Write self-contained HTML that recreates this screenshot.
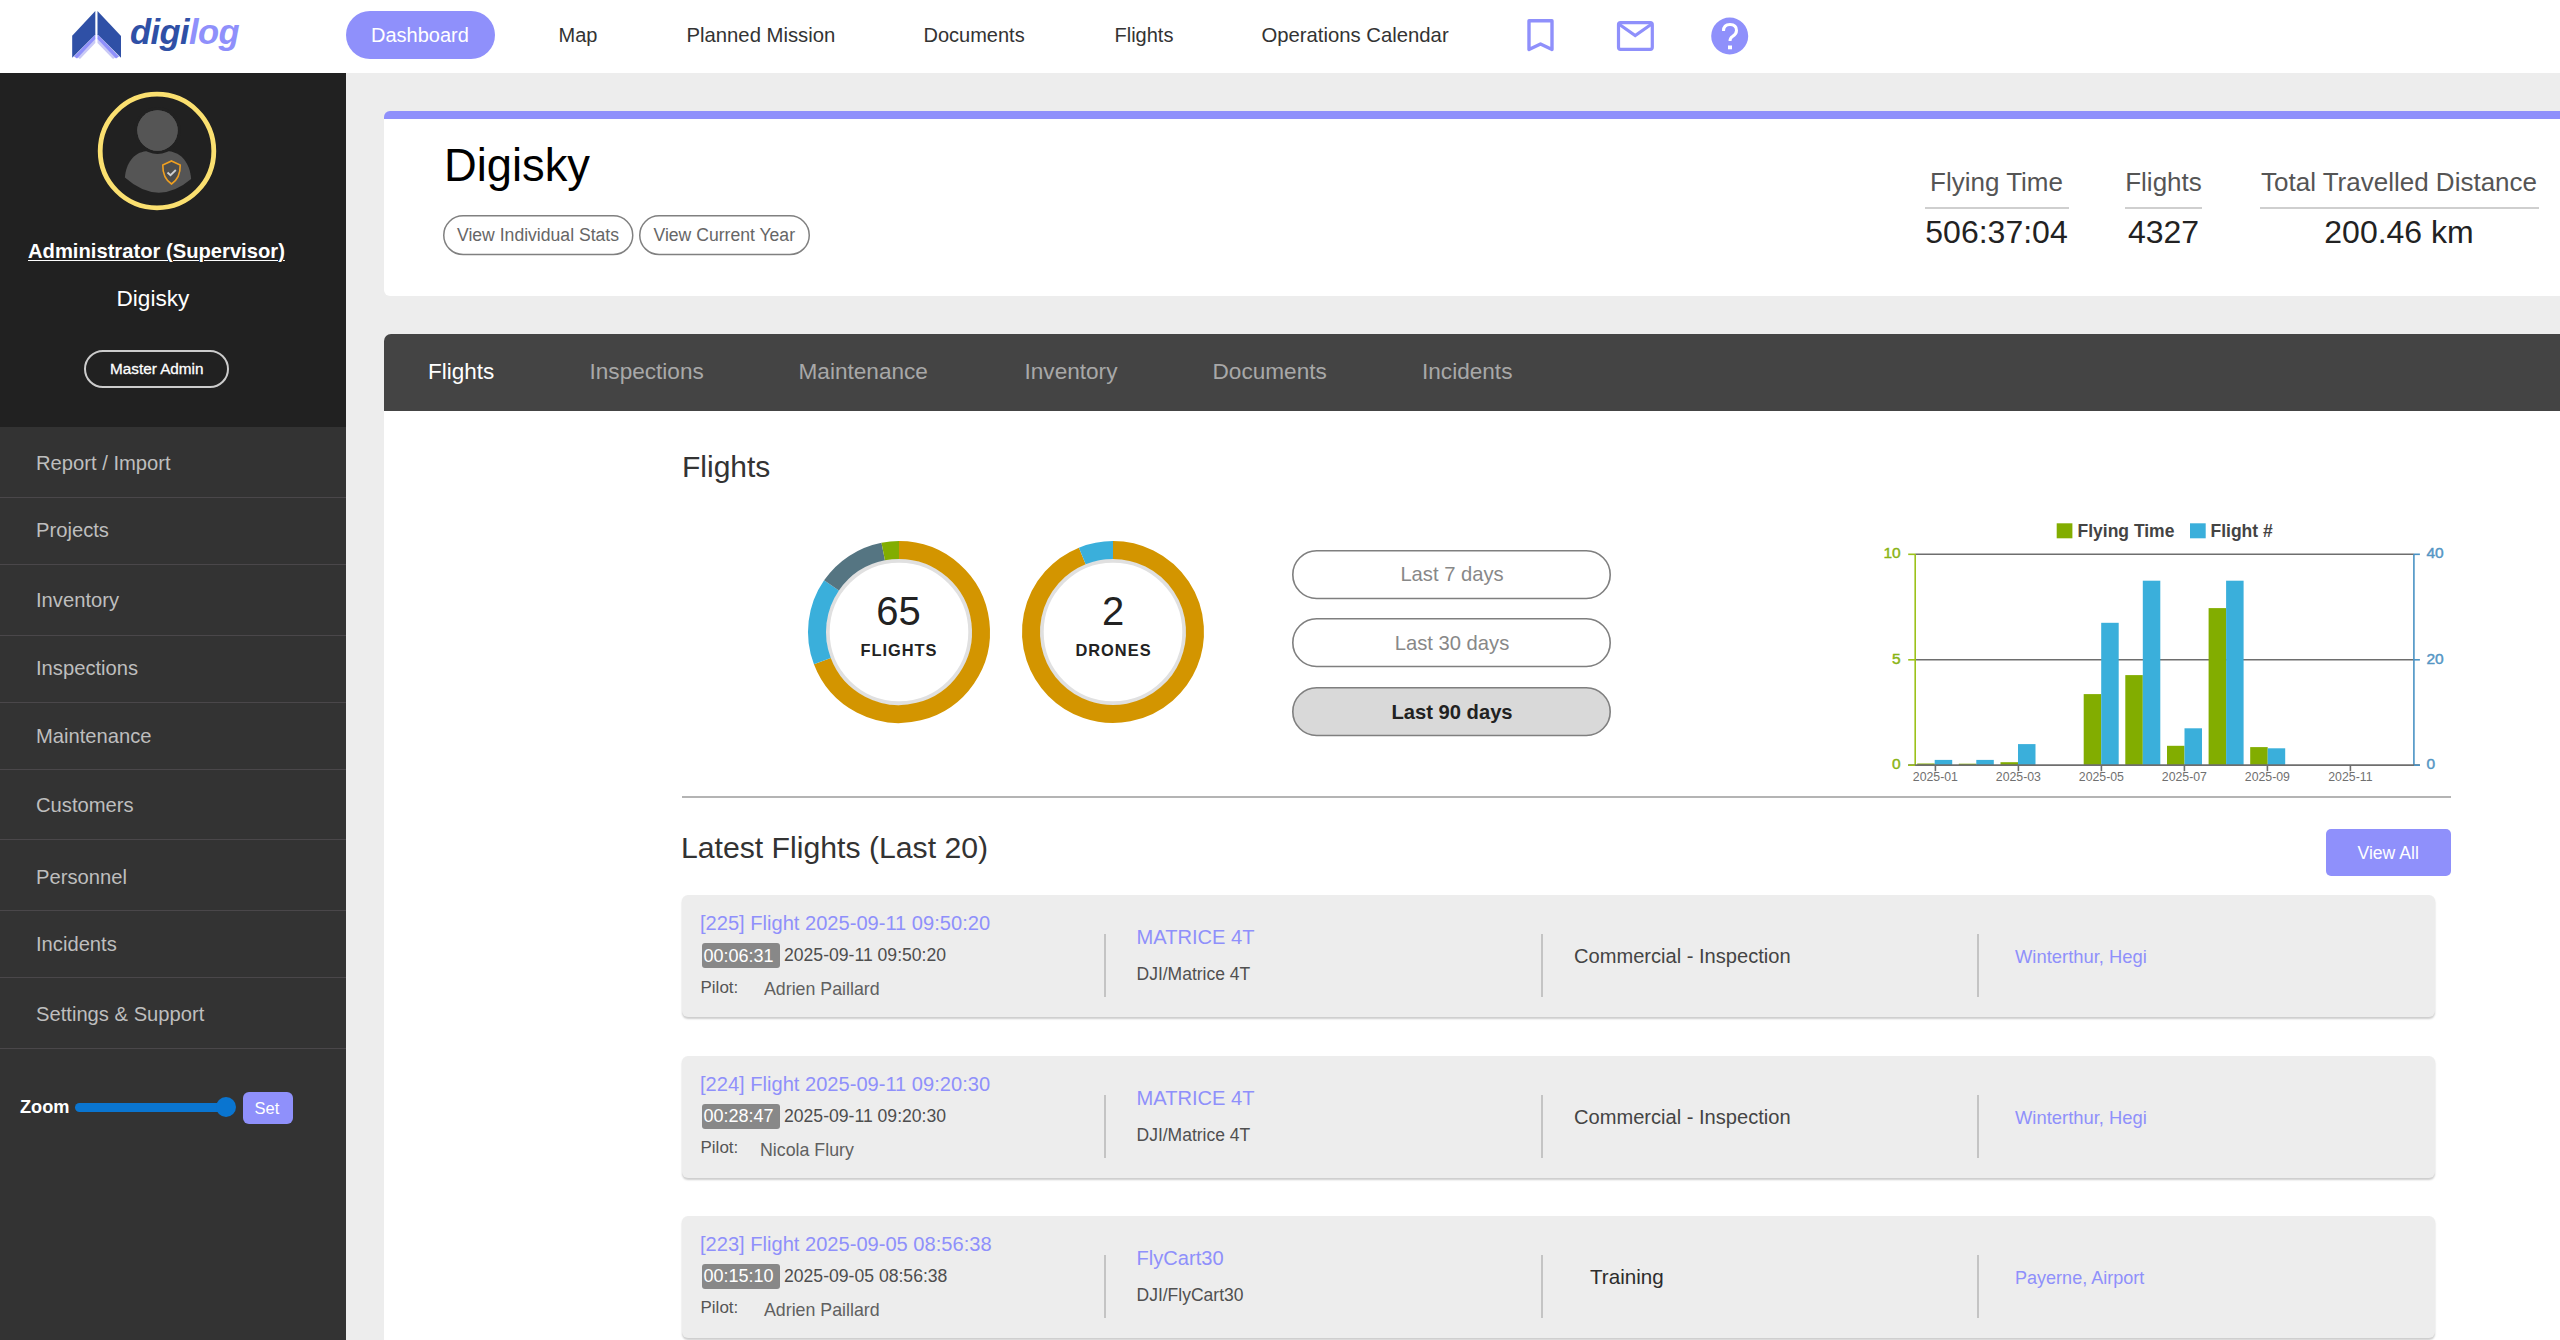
<!DOCTYPE html>
<html><head><meta charset="utf-8">
<style>
*{margin:0;padding:0;box-sizing:border-box}
html,body{width:2560px;height:1340px;overflow:hidden;background:#ededed;font-family:"Liberation Sans",sans-serif}
.a{position:absolute;white-space:pre;line-height:1}
</style></head><body>
<div style="position:absolute;left:0px;top:0px;width:2560px;height:73px;background:#fff;"></div>
<svg style="position:absolute;left:0;top:0" width="260" height="73" viewBox="0 0 260 73">
<polygon points="95.3,38 77,57 80,59 95.3,43" fill="#c9c9f6"/>
<polygon points="97.5,38 116,57 113,59 97.5,43" fill="#c9c9f6"/>
<polygon points="95.3,34.6 74,56.5 77,58.5 95.3,39" fill="#8f90fb"/>
<polygon points="97.5,34.3 119,56.5 116,58.5 97.5,39" fill="#8f90fb"/>
<polygon points="95.3,11.1 72.2,35.7 72.2,57.7 95.3,34.6" fill="#2f50a6"/>
<polygon points="97.5,11.1 121,36.1 121,57.7 97.5,34.3" fill="#2f50a6"/>
</svg>
<div class="a" style="left:130px;top:15.4px;font-size:34.6px;font-weight:700;font-style:italic;letter-spacing:-0.6px;color:#2f50a6">digi<span style="color:#8f90fb">log</span></div>
<div style="position:absolute;left:346px;top:11px;width:149px;height:48px;background:#8f90fb;border-radius:24px"></div>
<div class="a" style="left:371.0px;top:25.1px;font-size:20px;color:#fff;">Dashboard</div>
<div class="a" style="left:558.5px;top:25.1px;font-size:20px;color:#333;">Map</div>
<div class="a" style="left:686.5px;top:24.8px;font-size:20.3px;color:#333;">Planned Mission</div>
<div class="a" style="left:923.5px;top:25.1px;font-size:20px;color:#333;">Documents</div>
<div class="a" style="left:1114.5px;top:25.1px;font-size:20px;color:#333;">Flights</div>
<div class="a" style="left:1261.5px;top:24.8px;font-size:20.3px;color:#333;">Operations Calendar</div>
<svg style="position:absolute;left:1500px;top:0" width="280" height="73" viewBox="1500 0 280 73">
<path d="M1529,20.8 H1552 V49.5 L1540.5,44 L1529,49.5 Z" fill="none" stroke="#8f90fb" stroke-width="3.4" stroke-linejoin="round"/>
<rect x="1618.5" y="22.7" width="33.8" height="26.6" rx="2" fill="none" stroke="#8f90fb" stroke-width="3.2"/>
<path d="M1619.5,24.5 L1635.2,35.5 L1651,24.5" fill="none" stroke="#8f90fb" stroke-width="3.2"/>
<circle cx="1729.7" cy="36" r="18.5" fill="#8f90fb"/>
<path d="M1723.5,31 Q1723.5,24.5 1730,24.5 Q1736.5,24.5 1736.5,30.5 Q1736.5,34 1732.5,36.5 Q1730,38 1730,41" fill="none" stroke="#fff" stroke-width="3"/>
<rect x="1728" y="45.5" width="4" height="3.8" fill="#fff"/>
</svg>
<div style="position:absolute;left:0px;top:73px;width:346px;height:354px;background:#212121;"></div>
<div style="position:absolute;left:0px;top:427px;width:346px;height:913px;background:#333;"></div>
<svg style="position:absolute;left:0;top:73px" width="346" height="200" viewBox="0 73 346 200">
<circle cx="157" cy="151" r="56.8" fill="none" stroke="#fbe070" stroke-width="4.8"/>
<path d="M124.9,177.6 C126,163 134,152.5 146,151.3 L169,151.3 C181,152.5 190,163 191.1,179 Q158,207 124.9,177.6 Z" fill="#555"/>
<circle cx="157.5" cy="130.5" r="20.2" fill="#555" stroke="#212121" stroke-width="6.5" paint-order="stroke"/>
<circle cx="157.5" cy="130.5" r="20.2" fill="#555"/>
<path d="M171.5,161 L180.2,165 Q180.5,178 171.5,184 Q162.5,178 162.8,165 Z" fill="#4d4d4d" stroke="#f0a020" stroke-width="1.6"/>
<path d="M167.5,172.5 L170.5,175.2 L175.8,170" fill="none" stroke="#d0d0d0" stroke-width="1.8"/>
</svg>
<div class="a" style="left:28.0px;top:240.9px;font-size:20.2px;color:#fff;font-weight:700;text-decoration:underline;text-underline-offset:2px;text-decoration-thickness:1.2px">Administrator (Supervisor)</div>
<div class="a" style="left:116.5px;top:287.9px;font-size:22.6px;color:#fff;">Digisky</div>
<div style="position:absolute;left:84px;top:350px;width:145px;height:38px;background:transparent;border:2px solid #ccc;border-radius:19px"></div>
<div class="a" style="left:110.0px;top:361.0px;font-size:15.3px;color:#fff;-webkit-text-stroke:0.3px #fff">Master Admin</div>
<div class="a" style="left:36.0px;top:452.9px;font-size:20.2px;color:#bebebe;">Report / Import</div>
<div style="position:absolute;left:0px;top:497px;width:346px;height:1px;background:#4a474a;"></div>
<div class="a" style="left:36.0px;top:520.4px;font-size:20.2px;color:#bebebe;">Projects</div>
<div style="position:absolute;left:0px;top:564px;width:346px;height:1px;background:#4a474a;"></div>
<div class="a" style="left:36.0px;top:590.4px;font-size:20.2px;color:#bebebe;">Inventory</div>
<div style="position:absolute;left:0px;top:635px;width:346px;height:1px;background:#4a474a;"></div>
<div class="a" style="left:36.0px;top:658.4px;font-size:20.2px;color:#bebebe;">Inspections</div>
<div style="position:absolute;left:0px;top:702px;width:346px;height:1px;background:#4a474a;"></div>
<div class="a" style="left:36.0px;top:725.7px;font-size:20.2px;color:#bebebe;">Maintenance</div>
<div style="position:absolute;left:0px;top:769px;width:346px;height:1px;background:#4a474a;"></div>
<div class="a" style="left:36.0px;top:794.9px;font-size:20.2px;color:#bebebe;">Customers</div>
<div style="position:absolute;left:0px;top:839px;width:346px;height:1px;background:#4a474a;"></div>
<div class="a" style="left:36.0px;top:867.1px;font-size:20.2px;color:#bebebe;">Personnel</div>
<div style="position:absolute;left:0px;top:910px;width:346px;height:1px;background:#4a474a;"></div>
<div class="a" style="left:36.0px;top:934.4px;font-size:20.2px;color:#bebebe;">Incidents</div>
<div style="position:absolute;left:0px;top:977px;width:346px;height:1px;background:#4a474a;"></div>
<div class="a" style="left:36.0px;top:1004.2px;font-size:20.2px;color:#bebebe;">Settings &amp; Support</div>
<div style="position:absolute;left:0px;top:1048px;width:346px;height:1px;background:#4a474a;"></div>
<div class="a" style="left:20.0px;top:1097.8px;font-size:18.2px;color:#fff;font-weight:700;">Zoom</div>
<div style="position:absolute;left:74.5px;top:1102.5px;width:160px;height:9px;background:#0a75d0;border-radius:5px"></div>
<div style="position:absolute;left:216px;top:1097px;width:20px;height:20px;border-radius:50%;background:#0a75d0"></div>
<div style="position:absolute;left:243px;top:1092px;width:50px;height:32px;background:#8f90fb;border-radius:6px"></div>
<div class="a" style="left:254.5px;top:1100.3px;font-size:16.5px;color:#fff;">Set</div>
<div style="position:absolute;left:384px;top:111px;width:2176px;height:185px;background:#fff;border-top:8px solid #8f90fb;border-radius:6px 0 0 6px"></div>
<div class="a" style="left:444.0px;top:142.7px;font-size:45.3px;color:#000;">Digisky</div>
<svg style="position:absolute;left:441.3px;top:213px" width="194.5" height="44.3"><rect x="2.75" y="2.75" width="189.0" height="38.8" rx="19.4" fill="#fff" stroke="#808080" stroke-width="1.5"/></svg>
<div class="a" style="left:457.0px;top:227.1px;font-size:17.6px;color:#666;">View Individual Stats</div>
<svg style="position:absolute;left:637px;top:213px" width="175" height="44.3"><rect x="2.75" y="2.75" width="169.5" height="38.8" rx="19.4" fill="#fff" stroke="#808080" stroke-width="1.5"/></svg>
<div class="a" style="left:653.5px;top:227.1px;font-size:17.6px;color:#666;">View Current Year</div>
<div class="a" style="left:1924.5px;top:168.7px;width:144px;text-align:center;font-size:26px;color:#555">Flying Time</div>
<div style="position:absolute;left:1924.5px;top:207px;width:144px;height:2px;background:#cfcfcf;"></div>
<div class="a" style="left:1924.5px;top:216.2px;width:144px;text-align:center;font-size:32px;color:#222">506:37:04</div>
<div class="a" style="left:2125px;top:168.7px;width:77px;text-align:center;font-size:26px;color:#555">Flights</div>
<div style="position:absolute;left:2125px;top:207px;width:77px;height:2px;background:#cfcfcf;"></div>
<div class="a" style="left:2125px;top:216.2px;width:77px;text-align:center;font-size:32px;color:#222">4327</div>
<div class="a" style="left:2259.5px;top:168.7px;width:279px;text-align:center;font-size:26px;color:#555">Total Travelled Distance</div>
<div style="position:absolute;left:2259.5px;top:207px;width:279px;height:2px;background:#cfcfcf;"></div>
<div class="a" style="left:2259.5px;top:216.2px;width:279px;text-align:center;font-size:32px;color:#222">200.46 km</div>
<div style="position:absolute;left:384px;top:333.5px;width:2176px;height:77px;background:#444;border-top-left-radius:7px"></div>
<div class="a" style="left:428.0px;top:360.9px;font-size:22.5px;color:#fff;">Flights</div>
<div class="a" style="left:589.5px;top:360.8px;font-size:22.6px;color:#a8a8a8;">Inspections</div>
<div class="a" style="left:798.5px;top:360.8px;font-size:22.6px;color:#a8a8a8;">Maintenance</div>
<div class="a" style="left:1024.5px;top:360.8px;font-size:22.6px;color:#a8a8a8;">Inventory</div>
<div class="a" style="left:1212.5px;top:360.8px;font-size:22.6px;color:#a8a8a8;">Documents</div>
<div class="a" style="left:1422.0px;top:360.8px;font-size:22.6px;color:#a8a8a8;">Incidents</div>
<div style="position:absolute;left:384px;top:410.5px;width:2176px;height:930px;background:#fff;"></div>
<div class="a" style="left:682.0px;top:452.4px;font-size:30px;color:#333;">Flights</div>
<svg style="position:absolute;left:798.5px;top:532px" width="200" height="200" viewBox="798.5 532 200 200"><circle cx="898.5" cy="632" r="71.3" fill="none" stroke="#e0e0e0" stroke-width="4"/><path d="M898.50,550.00 A82,82 0 1 1 821.84,661.12" fill="none" stroke="#d39500" stroke-width="18"/><path d="M821.84,661.12 A82,82 0 0 1 831.00,585.44" fill="none" stroke="#3aafdb" stroke-width="18"/><path d="M831.00,585.44 A82,82 0 0 1 882.71,551.53" fill="none" stroke="#557582" stroke-width="18"/><path d="M882.71,551.53 A82,82 0 0 1 898.50,550.00" fill="none" stroke="#82ad00" stroke-width="18"/></svg>
<svg style="position:absolute;left:1013px;top:532px" width="200" height="200" viewBox="1013 532 200 200"><circle cx="1113" cy="632" r="71.3" fill="none" stroke="#e0e0e0" stroke-width="4"/><path d="M1113.00,550.00 A82,82 0 1 1 1082.28,555.97" fill="none" stroke="#d39500" stroke-width="18"/><path d="M1082.28,555.97 A82,82 0 0 1 1113.00,550.00" fill="none" stroke="#3aafdb" stroke-width="18"/></svg>
<div class="a" style="left:798.5px;top:590.6px;width:200px;text-align:center;font-size:40px;color:#222">65</div>
<div class="a" style="left:798.5px;top:641.8px;width:200px;text-align:center;font-size:16.4px;font-weight:700;letter-spacing:1px;color:#222;padding-left:1px">FLIGHTS</div>
<div class="a" style="left:1013px;top:590.6px;width:200px;text-align:center;font-size:40px;color:#222">2</div>
<div class="a" style="left:1013px;top:641.8px;width:200px;text-align:center;font-size:16.4px;font-weight:700;letter-spacing:1px;color:#222;padding-left:1px">DRONES</div>
<svg style="position:absolute;left:1290.3px;top:547.7px" width="323" height="53.3"><rect x="2.8" y="2.8" width="317.4" height="47.699999999999996" rx="23.849999999999998" fill="#fff" stroke="#7f7f7f" stroke-width="1.6"/></svg>
<div class="a" style="left:1292.5px;top:564.4px;width:319px;text-align:center;font-size:20.2px;font-weight:400;color:#888">Last 7 days</div>
<svg style="position:absolute;left:1290.3px;top:616.2px" width="323" height="53.3"><rect x="2.8" y="2.8" width="317.4" height="47.699999999999996" rx="23.849999999999998" fill="#fff" stroke="#7f7f7f" stroke-width="1.6"/></svg>
<div class="a" style="left:1292.5px;top:632.9px;width:319px;text-align:center;font-size:20.2px;font-weight:400;color:#888">Last 30 days</div>
<svg style="position:absolute;left:1290.3px;top:685.2px" width="323" height="53.3"><rect x="2.8" y="2.8" width="317.4" height="47.699999999999996" rx="23.849999999999998" fill="#d9d9d9" stroke="#7f7f7f" stroke-width="1.6"/></svg>
<div class="a" style="left:1292.5px;top:701.9px;width:319px;text-align:center;font-size:20.2px;font-weight:700;color:#222">Last 90 days</div>
<div style="position:absolute;left:682px;top:796px;width:1769px;height:2px;background:#b4b4b4;"></div>
<svg style="position:absolute;left:1860px;top:500px" width="620" height="300" viewBox="1860 500 620 300"><line x1="1915.2" y1="659.8" x2="2413.9" y2="659.8" stroke="#6e6e6e" stroke-width="1.6"/><line x1="1915.2" y1="554.3" x2="2413.9" y2="554.3" stroke="#6e6e6e" stroke-width="1.6"/><rect x="1917.2" y="763.5" width="17.5" height="1.7" fill="#82ad00"/><rect x="1934.7" y="759.9" width="17.5" height="5.3" fill="#3aafdb"/><rect x="1958.8" y="763.7" width="17.5" height="1.5" fill="#82ad00"/><rect x="1976.3" y="759.9" width="17.5" height="5.3" fill="#3aafdb"/><rect x="2000.5" y="762.2" width="17.5" height="3.0" fill="#82ad00"/><rect x="2018.0" y="744.1" width="17.5" height="21.1" fill="#3aafdb"/><rect x="2083.7" y="694.1" width="17.5" height="71.1" fill="#82ad00"/><rect x="2101.2" y="622.8" width="17.5" height="142.4" fill="#3aafdb"/><rect x="2125.3" y="675.1" width="17.5" height="90.1" fill="#82ad00"/><rect x="2142.8" y="580.7" width="17.5" height="184.5" fill="#3aafdb"/><rect x="2167.0" y="745.8" width="17.5" height="19.4" fill="#82ad00"/><rect x="2184.5" y="728.3" width="17.5" height="36.9" fill="#3aafdb"/><rect x="2208.6" y="608.1" width="17.5" height="157.1" fill="#82ad00"/><rect x="2226.1" y="580.7" width="17.5" height="184.5" fill="#3aafdb"/><rect x="2250.2" y="747.1" width="17.5" height="18.1" fill="#82ad00"/><rect x="2267.7" y="748.3" width="17.5" height="16.9" fill="#3aafdb"/><line x1="1915.2" y1="554.3" x2="1915.2" y2="765.2" stroke="#9cc21a" stroke-width="1.6"/><line x1="2413.9" y1="554.3" x2="2413.9" y2="765.2" stroke="#4a93c4" stroke-width="1.6"/><line x1="1908.2" y1="765.2" x2="2419.9" y2="765.2" stroke="#6e6e6e" stroke-width="1.8"/><line x1="1908.2" y1="765.2" x2="1915.2" y2="765.2" stroke="#9cc21a" stroke-width="1.6"/><line x1="2413.9" y1="765.2" x2="2419.9" y2="765.2" stroke="#4a93c4" stroke-width="1.6"/><text x="1900.7" y="769.0" text-anchor="end" font-family="Liberation Sans" font-size="15.5" fill="#8ab414" stroke="#8ab414" stroke-width="0.45">0</text><text x="2426.4" y="769.0" font-family="Liberation Sans" font-size="15.5" fill="#5596c4" stroke="#5596c4" stroke-width="0.45">0</text><line x1="1908.2" y1="659.8" x2="1915.2" y2="659.8" stroke="#9cc21a" stroke-width="1.6"/><line x1="2413.9" y1="659.8" x2="2419.9" y2="659.8" stroke="#4a93c4" stroke-width="1.6"/><text x="1900.7" y="663.5" text-anchor="end" font-family="Liberation Sans" font-size="15.5" fill="#8ab414" stroke="#8ab414" stroke-width="0.45">5</text><text x="2426.4" y="663.5" font-family="Liberation Sans" font-size="15.5" fill="#5596c4" stroke="#5596c4" stroke-width="0.45">20</text><line x1="1908.2" y1="554.3" x2="1915.2" y2="554.3" stroke="#9cc21a" stroke-width="1.6"/><line x1="2413.9" y1="554.3" x2="2419.9" y2="554.3" stroke="#4a93c4" stroke-width="1.6"/><text x="1900.7" y="558.1" text-anchor="end" font-family="Liberation Sans" font-size="15.5" fill="#8ab414" stroke="#8ab414" stroke-width="0.45">10</text><text x="2426.4" y="558.1" font-family="Liberation Sans" font-size="15.5" fill="#5596c4" stroke="#5596c4" stroke-width="0.45">40</text><line x1="1935.4" y1="765.2" x2="1935.4" y2="771.2" stroke="#6e6e6e" stroke-width="1.6"/><text x="1935.4" y="781.3" text-anchor="middle" font-family="Liberation Sans" font-size="12.3" fill="#707070">2025-01</text><line x1="2018.4" y1="765.2" x2="2018.4" y2="771.2" stroke="#6e6e6e" stroke-width="1.6"/><text x="2018.4" y="781.3" text-anchor="middle" font-family="Liberation Sans" font-size="12.3" fill="#707070">2025-03</text><line x1="2101.4" y1="765.2" x2="2101.4" y2="771.2" stroke="#6e6e6e" stroke-width="1.6"/><text x="2101.4" y="781.3" text-anchor="middle" font-family="Liberation Sans" font-size="12.3" fill="#707070">2025-05</text><line x1="2184.4" y1="765.2" x2="2184.4" y2="771.2" stroke="#6e6e6e" stroke-width="1.6"/><text x="2184.4" y="781.3" text-anchor="middle" font-family="Liberation Sans" font-size="12.3" fill="#707070">2025-07</text><line x1="2267.4" y1="765.2" x2="2267.4" y2="771.2" stroke="#6e6e6e" stroke-width="1.6"/><text x="2267.4" y="781.3" text-anchor="middle" font-family="Liberation Sans" font-size="12.3" fill="#707070">2025-09</text><line x1="2350.4" y1="765.2" x2="2350.4" y2="771.2" stroke="#6e6e6e" stroke-width="1.6"/><text x="2350.4" y="781.3" text-anchor="middle" font-family="Liberation Sans" font-size="12.3" fill="#707070">2025-11</text><rect x="2056.7" y="523.3" width="15.7" height="15" fill="#82ad00"/><text x="2077.5" y="536.5" font-family="Liberation Sans" font-size="17.5" font-weight="700" fill="#444">Flying Time</text><rect x="2190" y="523.3" width="15.7" height="15" fill="#3aafdb"/><text x="2210.5" y="536.5" font-family="Liberation Sans" font-size="17.5" font-weight="700" fill="#444">Flight #</text></svg>
<div class="a" style="left:681.0px;top:833.0px;font-size:30.2px;color:#333;">Latest Flights (Last 20)</div>
<div style="position:absolute;left:2326px;top:829px;width:125px;height:47px;background:#8f90fb;border-radius:5px"></div>
<div class="a" style="left:2357.5px;top:844.5px;font-size:17.6px;color:#fff;">View All</div>
<div style="position:absolute;left:682px;top:895px;width:1753px;height:122px;background:#ededed;border-radius:6px;box-shadow:0 2px 2px rgba(0,0,0,.2)"></div>
<div class="a" style="left:700.0px;top:913.0px;font-size:20.1px;color:#8f90fb;">[225] Flight 2025-09-11 09:50:20</div>
<div style="position:absolute;left:701.5px;top:943px;width:78px;height:25px;background:#888;border-radius:3px"></div>
<div class="a" style="left:703.5px;top:946.8px;font-size:18px;color:#fff;">00:06:31</div>
<div class="a" style="left:784.0px;top:947.1px;font-size:17.6px;color:#4e4e4e;">2025-09-11 09:50:20</div>
<div class="a" style="left:700.5px;top:978.9px;font-size:17px;color:#555;">Pilot:</div>
<div class="a" style="left:764.0px;top:980.6px;font-size:17.8px;color:#606060;">Adrien Paillard</div>
<div style="position:absolute;left:1104px;top:934px;width:2px;height:63px;background:#c4c4c4;"></div>
<div style="position:absolute;left:1541px;top:934px;width:2px;height:63px;background:#c4c4c4;"></div>
<div style="position:absolute;left:1977px;top:934px;width:2px;height:63px;background:#c4c4c4;"></div>
<div class="a" style="left:1136.5px;top:927.0px;font-size:20.1px;color:#8f90fb;">MATRICE 4T</div>
<div class="a" style="left:1136.5px;top:966.2px;font-size:17.5px;color:#505050;">DJI/Matrice 4T</div>
<div class="a" style="left:1574.0px;top:946.3px;font-size:20.1px;color:#444;">Commercial - Inspection</div>
<div class="a" style="left:2015.0px;top:948.4px;font-size:18.4px;color:#8f90fb;">Winterthur, Hegi</div>
<div style="position:absolute;left:682px;top:1055.5px;width:1753px;height:122px;background:#ededed;border-radius:6px;box-shadow:0 2px 2px rgba(0,0,0,.2)"></div>
<div class="a" style="left:700.0px;top:1073.5px;font-size:20.1px;color:#8f90fb;">[224] Flight 2025-09-11 09:20:30</div>
<div style="position:absolute;left:701.5px;top:1103.5px;width:78px;height:25px;background:#888;border-radius:3px"></div>
<div class="a" style="left:703.5px;top:1107.3px;font-size:18px;color:#fff;">00:28:47</div>
<div class="a" style="left:784.0px;top:1107.6px;font-size:17.6px;color:#4e4e4e;">2025-09-11 09:20:30</div>
<div class="a" style="left:700.5px;top:1139.4px;font-size:17px;color:#555;">Pilot:</div>
<div class="a" style="left:760.0px;top:1141.8px;font-size:17.8px;color:#606060;">Nicola Flury</div>
<div style="position:absolute;left:1104px;top:1094.5px;width:2px;height:63px;background:#c4c4c4;"></div>
<div style="position:absolute;left:1541px;top:1094.5px;width:2px;height:63px;background:#c4c4c4;"></div>
<div style="position:absolute;left:1977px;top:1094.5px;width:2px;height:63px;background:#c4c4c4;"></div>
<div class="a" style="left:1136.5px;top:1087.5px;font-size:20.1px;color:#8f90fb;">MATRICE 4T</div>
<div class="a" style="left:1136.5px;top:1126.7px;font-size:17.5px;color:#505050;">DJI/Matrice 4T</div>
<div class="a" style="left:1574.0px;top:1106.8px;font-size:20.1px;color:#444;">Commercial - Inspection</div>
<div class="a" style="left:2015.0px;top:1108.9px;font-size:18.4px;color:#8f90fb;">Winterthur, Hegi</div>
<div style="position:absolute;left:682px;top:1215.5px;width:1753px;height:122px;background:#ededed;border-radius:6px;box-shadow:0 2px 2px rgba(0,0,0,.2)"></div>
<div class="a" style="left:700.0px;top:1233.5px;font-size:20.1px;color:#8f90fb;">[223] Flight 2025-09-05 08:56:38</div>
<div style="position:absolute;left:701.5px;top:1263.5px;width:78px;height:25px;background:#888;border-radius:3px"></div>
<div class="a" style="left:703.5px;top:1267.3px;font-size:18px;color:#fff;">00:15:10</div>
<div class="a" style="left:784.0px;top:1267.6px;font-size:17.6px;color:#4e4e4e;">2025-09-05 08:56:38</div>
<div class="a" style="left:700.5px;top:1299.4px;font-size:17px;color:#555;">Pilot:</div>
<div class="a" style="left:764.0px;top:1301.8px;font-size:17.8px;color:#606060;">Adrien Paillard</div>
<div style="position:absolute;left:1104px;top:1254.5px;width:2px;height:63px;background:#c4c4c4;"></div>
<div style="position:absolute;left:1541px;top:1254.5px;width:2px;height:63px;background:#c4c4c4;"></div>
<div style="position:absolute;left:1977px;top:1254.5px;width:2px;height:63px;background:#c4c4c4;"></div>
<div class="a" style="left:1136.5px;top:1247.5px;font-size:20.1px;color:#8f90fb;">FlyCart30</div>
<div class="a" style="left:1136.5px;top:1286.7px;font-size:17.5px;color:#505050;">DJI/FlyCart30</div>
<div class="a" style="left:1590.0px;top:1267.4px;font-size:20.6px;color:#2c2c2c;">Training</div>
<div class="a" style="left:2015.0px;top:1269.2px;font-size:18.05px;color:#8f90fb;">Payerne, Airport</div>
</body></html>
